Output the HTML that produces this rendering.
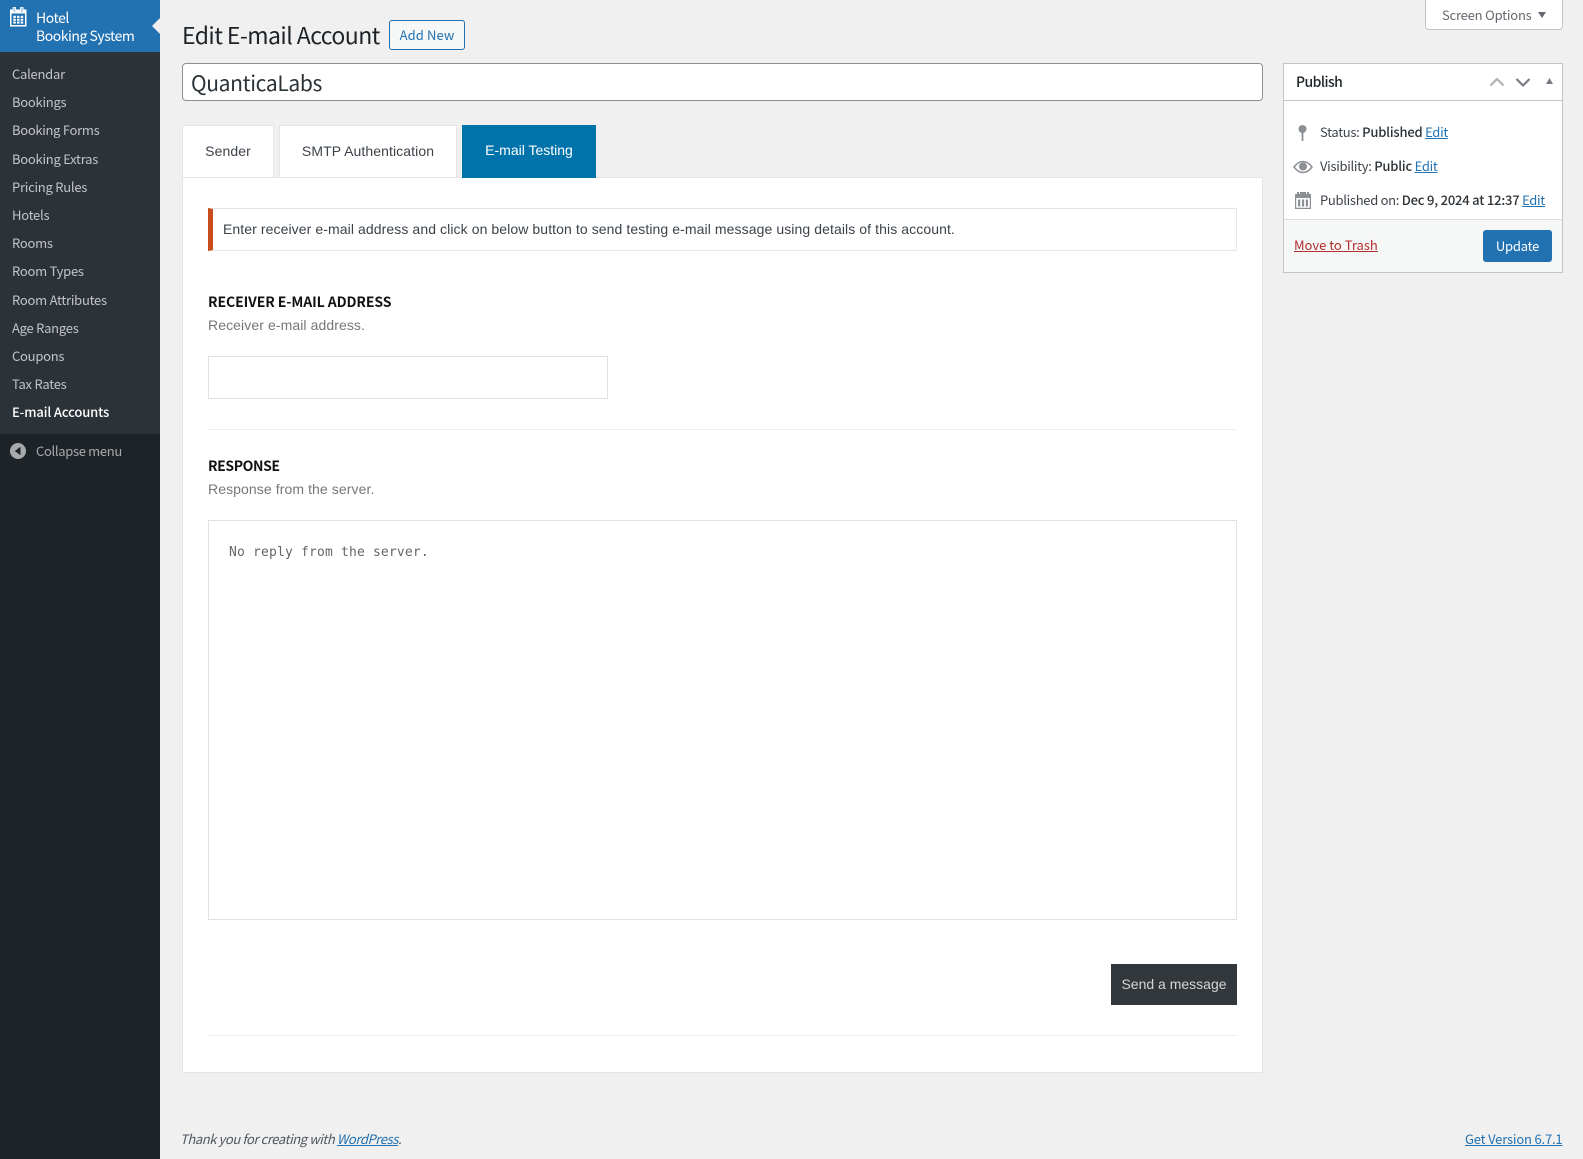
<!DOCTYPE html>
<html lang="en"><head><meta charset="utf-8"><title>Edit E-mail Account</title>
<style>
html,body{margin:0;padding:0;width:1583px;height:1159px;overflow:hidden;background:#f0f0f1}
body{position:relative;font-family:"Noto Sans CJK JP","Liberation Sans",sans-serif;font-size:13px;color:#3c434a}
.a{position:absolute;box-sizing:border-box}
.t{position:absolute;white-space:nowrap;line-height:20px;height:20px}
.m{font-size:13px;color:#c3c4c7;left:12px;letter-spacing:-.25px}
.l{font-family:"Liberation Sans",sans-serif;letter-spacing:.09px}
a{color:#2271b1;text-decoration:underline}
.b{font-weight:500;color:#2c3338;letter-spacing:-.2px}
.s{letter-spacing:-.3px}
</style></head><body>
<div class="a" style="left:0;top:0;width:160px;height:1159px;background:#1d2327"></div>
<div class="a" style="left:0;top:0;width:160px;height:52px;background:#2271b1"></div>
<div class="a" style="left:0;top:52px;width:160px;height:382px;background:#2c3338"></div>
<div class="a" style="left:152px;top:18px;width:0;height:0;border:8px solid transparent;border-left:0;border-right:8px solid #f0f0f1"></div>
<svg class="a" style="left:8px;top:6px" width="20" height="22" viewBox="0 0 20 22"><rect x="2.750" y="4.200" width="15" height="15.600" fill="none" stroke="#fff" stroke-width="1.500"/><rect x="2" y="4" width="16" height="3.500" fill="#fff"/><rect x="5" y="1.500" width="2.600" height="5" fill="#a9cbe6" stroke="#fff" stroke-width=".8"/><rect x="12.500" y="1.500" width="2.600" height="5" fill="#a9cbe6" stroke="#fff" stroke-width=".8"/><g fill="#fff"><rect x="5.300" y="9.800" width="2.500" height="2.100"/><rect x="9" y="9.800" width="2.500" height="2.100"/><rect x="12.700" y="9.800" width="2.500" height="2.100"/><rect x="5.300" y="12.700" width="2.500" height="2.100"/><rect x="9" y="12.700" width="2.500" height="2.100"/><rect x="12.700" y="12.700" width="2.500" height="2.100"/><rect x="5.300" y="15.500" width="2.500" height="2.100"/><rect x="9" y="15.500" width="2.500" height="2.100"/><rect x="12.700" y="15.500" width="2.500" height="2.100"/></g></svg>
<div class="t" style="left:36px;top:8px;font-size:14px;color:#fff;letter-spacing:-.47px">Hotel</div>
<div class="t" style="left:36px;top:26px;font-size:14px;color:#fff;letter-spacing:-.47px">Booking System</div>
<div class="t m" style="top:64px">Calendar</div>
<div class="t m" style="top:92px">Bookings</div>
<div class="t m" style="top:120px;letter-spacing:-.3px">Booking Forms</div>
<div class="t m" style="top:149px">Booking Extras</div>
<div class="t m" style="top:177px">Pricing Rules</div>
<div class="t m" style="top:205px">Hotels</div>
<div class="t m" style="top:233px">Rooms</div>
<div class="t m" style="top:261px">Room Types</div>
<div class="t m" style="top:290px">Room Attributes</div>
<div class="t m" style="top:318px">Age Ranges</div>
<div class="t m" style="top:346px">Coupons</div>
<div class="t m" style="top:374px">Tax Rates</div>
<div class="t m" style="top:402px;color:#fff;font-weight:500;letter-spacing:-.12px">E-mail Accounts</div>
<svg class="a" style="left:10px;top:443px" width="16" height="16" viewBox="0 0 16 16"><circle cx="8" cy="8" r="8" fill="#a7aaad"/><path d="M10.500 3.800v8.400L4.800 8z" fill="#1d2327"/></svg>
<div class="t" style="left:36px;top:441px;color:#a7aaad;letter-spacing:-.33px">Collapse menu</div>

<div class="t" style="left:182px;top:19px;height:30px;line-height:30px;font-size:23px;font-weight:400;color:#1d2327;letter-spacing:-.56px">Edit E-mail Account</div>
<div class="a" style="left:389px;top:20px;width:76px;height:30px;border:1px solid #2271b1;border-radius:3px;background:#f6f7f7;color:#2271b1;text-align:center;line-height:28px;letter-spacing:.1px">Add New</div>
<div class="a" style="left:1425px;top:-4px;width:138px;height:34px;background:#fff;border:1px solid #c3c4c7;border-radius:0 0 4px 4px"></div>
<div class="t" style="left:1442px;top:5px;color:#646970;letter-spacing:-.2px">Screen Options</div>
<div class="a" style="left:1538px;top:12px;width:0;height:0;border:4px solid transparent;border-top:6px solid #646970;border-bottom:0"></div>
<div class="a" style="left:182px;top:63px;width:1081px;height:38px;background:#fff;border:1px solid #8c8f94;border-radius:4px"></div>
<div class="t" style="left:191px;top:68px;height:30px;line-height:30px;font-size:21px;color:#2c3338;letter-spacing:-.33px">QuanticaLabs</div>

<div class="a" style="left:182px;top:177px;width:1081px;height:896px;background:#fff;border:1px solid #e5e5e5"></div>
<div class="a l" style="left:182px;top:125px;width:92px;height:53px;background:#fff;border:1px solid #e5e5e5;text-align:center;line-height:51px;font-size:14px;color:#3c434a">Sender</div>
<div class="a l" style="left:279px;top:125px;width:178px;height:53px;background:#fff;border:1px solid #e5e5e5;text-align:center;line-height:51px;font-size:14px;color:#3c434a">SMTP Authentication</div>
<div class="a l" style="left:462px;top:125px;width:134px;height:53px;background:#0073aa;text-align:center;line-height:51px;font-size:14px;color:#fff;letter-spacing:0">E-mail Testing</div>

<div class="a" style="left:208px;top:208px;width:1029px;height:43px;background:#fff;border:1px solid #e5e5e5;border-left:5px solid #c94c1b"></div>
<div class="t l" style="left:223px;top:219px;font-size:14px;color:#3c434a">Enter receiver e-mail address and click on below button to send testing e-mail message using details of this account.</div>

<div class="t" style="left:208px;top:292px;font-size:14px;font-weight:700;color:#111;letter-spacing:-.09px">RECEIVER E-MAIL ADDRESS</div>
<div class="t l" style="left:208px;top:315px;font-size:14px;color:#777">Receiver e-mail address.</div>
<div class="a" style="left:208px;top:356px;width:400px;height:43px;background:#fff;border:1px solid #e1e1e1"></div>
<div class="a" style="left:208px;top:429px;width:1029px;height:1px;background:#efefef"></div>
<div class="t" style="left:208px;top:456px;font-size:14px;font-weight:700;color:#111;letter-spacing:-.4px">RESPONSE</div>
<div class="t l" style="left:208px;top:479px;font-size:14px;color:#777">Response from the server.</div>
<div class="a" style="left:208px;top:520px;width:1029px;height:400px;background:#fff;border:1px solid #e1e1e1"></div>
<div class="t" style="left:229px;top:543px;font-family:'DejaVu Sans Mono',monospace;font-size:13px;letter-spacing:.17px;color:#666">No reply from the server.</div>
<div class="a l" style="left:1111px;top:964px;width:126px;height:41px;background:#32373c;color:#d4d4d4;text-align:center;line-height:41px;font-size:14px;letter-spacing:0">Send a message</div>
<div class="a" style="left:208px;top:1035px;width:1029px;height:1px;background:#efefef"></div>

<div class="a" style="left:1283px;top:63px;width:280px;height:210px;background:#fff;border:1px solid #c3c4c7"></div>
<div class="a" style="left:1284px;top:100px;width:278px;height:1px;background:#c3c4c7"></div>
<div class="t" style="left:1296px;top:72px;font-size:14px;font-weight:500;color:#1d2327;letter-spacing:-.55px">Publish</div>
<svg class="a" style="left:1488px;top:74px" width="70" height="16" viewBox="0 0 70 16"><path d="M2.500 11.500L9 5l6.500 6.500" fill="none" stroke="#b0b3b6" stroke-width="2.200"/><path d="M28.500 5l6.500 6.500L41.500 5" fill="none" stroke="#787c82" stroke-width="2.200"/><path d="M58 10l3.500-6 3.500 6z" fill="#787c82"/></svg>
<svg class="a" style="left:1296px;top:124px" width="14" height="18" viewBox="0 0 14 18"><circle cx="6.500" cy="5" r="4" fill="#8c8f94"/><rect x="5.600" y="6" width="1.800" height="11" fill="#8c8f94"/></svg>
<div class="t s" style="left:1320px;top:122px">Status: <span class="b">Published</span> <a>Edit</a></div>
<svg class="a" style="left:1293px;top:159px" width="20" height="16" viewBox="0 0 20 16"><path d="M1 8c3-4 5.500-5.500 9-5.500S16 4 19 8c-3 4-5.500 5.500-9 5.500S4 12 1 8z" fill="none" stroke="#8c8f94" stroke-width="1.500"/><circle cx="10" cy="7.500" r="4" fill="#8c8f94"/></svg>
<div class="t s" style="left:1320px;top:156px">Visibility: <span class="b">Public</span> <a>Edit</a></div>
<svg class="a" style="left:1294px;top:191px" width="18" height="18" viewBox="0 0 18 18" fill="#8c8f94"><path fill-rule="evenodd" d="M3 1h2v2h1V1h6v2h1V1h2v2h2v15H1V3h2zM2.200 7v9.800h13.600V7z"/><rect x="4" y="8.500" width="2.200" height="7"/><rect x="7.900" y="8.500" width="2.200" height="7"/><rect x="11.800" y="8.500" width="2.200" height="7"/></svg>
<div class="t s" style="left:1320px;top:190px">Published on: <span class="b">Dec 9, 2024 at 12:37</span> <a>Edit</a></div>
<div class="a" style="left:1284px;top:219px;width:278px;height:53px;background:#f6f7f7;border-top:1px solid #dcdcde"></div>
<div class="t" style="left:1294px;top:235px"><a style="color:#b32d2e">Move to Trash</a></div>
<div class="a" style="left:1483px;top:230px;width:69px;height:32px;background:#2271b1;border-radius:3px;color:#fff;text-align:center;line-height:32px;letter-spacing:-.2px">Update</div>

<div class="t" style="left:180px;top:1129px;font-style:italic;color:#50575e;letter-spacing:-.41px">Thank you for creating with <a>WordPress</a>.</div>
<div class="t" style="left:1465px;top:1129px;letter-spacing:-.18px"><a>Get Version 6.7.1</a></div>
</body></html>
